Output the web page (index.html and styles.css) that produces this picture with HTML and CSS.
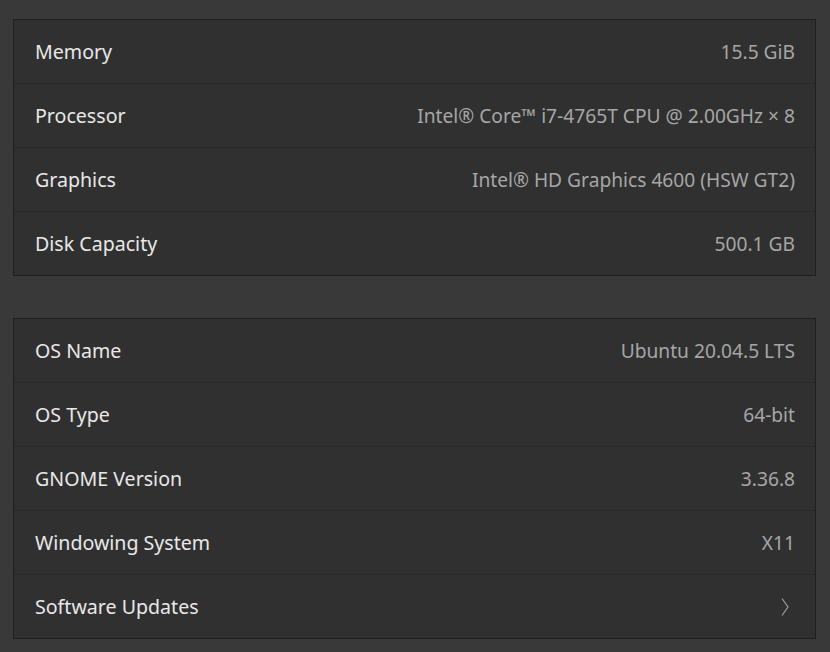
FILE: index.html
```html
<!DOCTYPE html>
<html>
<head>
<meta charset="utf-8">
<link rel="stylesheet" href="styles.css">
</head>
<body>
<div class="page">
  <div class="card">
    <div class="row"><span class="label">Memory</span><span class="value">15.5 GiB</span></div>
    <div class="row"><span class="label">Processor</span><span class="value">Intel® Core™ i7-4765T CPU @ 2.00GHz × 8</span></div>
    <div class="row"><span class="label">Graphics</span><span class="value">Intel® HD Graphics 4600 (HSW GT2)</span></div>
    <div class="row"><span class="label">Disk Capacity</span><span class="value">500.1 GB</span></div>
  </div>
  <div class="card">
    <div class="row"><span class="label">OS Name</span><span class="value">Ubuntu 20.04.5 LTS</span></div>
    <div class="row"><span class="label">OS Type</span><span class="value">64-bit</span></div>
    <div class="row"><span class="label">GNOME Version</span><span class="value">3.36.8</span></div>
    <div class="row"><span class="label">Windowing System</span><span class="value">X11</span></div>
    <div class="row"><span class="label">Software Updates</span><span class="value chevron"><svg width="10" height="20" viewBox="0 0 10 20"><path d="M2 1.5 L8 10 L2 18.5" fill="none" stroke="#a0a0a0" stroke-width="1.2"/></svg></span></div>
  </div>
</div>
</body>
</html>
```
FILE: styles.css
```css
html, body {
  margin: 0;
  padding: 0;
  background: #393939;
}
.page {
  padding: 19px 14px 12px 13px;
  display: flex;
  flex-direction: column;
  gap: 42px;
  font-family: "Noto Sans", "Open Sans", sans-serif;
}
.card {
  background: #303030;
  border: 1px solid #1f1f1f;
  display: flex;
  flex-direction: column;
}
.row {
  height: 63px;
  display: flex;
  align-items: center;
  justify-content: space-between;
  padding: 0 20px 0 21px;
  border-bottom: 1px solid #2a2a2a;
}
.row:last-child {
  border-bottom: none;
}
.label {
  color: #e8e8e8;
  font-size: 19.6px;
}
.value {
  color: #a6a6a6;
  font-size: 19.2px;
}
.chevron {
  display: flex;
  align-items: center;
  padding-right: 5px;
}
```
